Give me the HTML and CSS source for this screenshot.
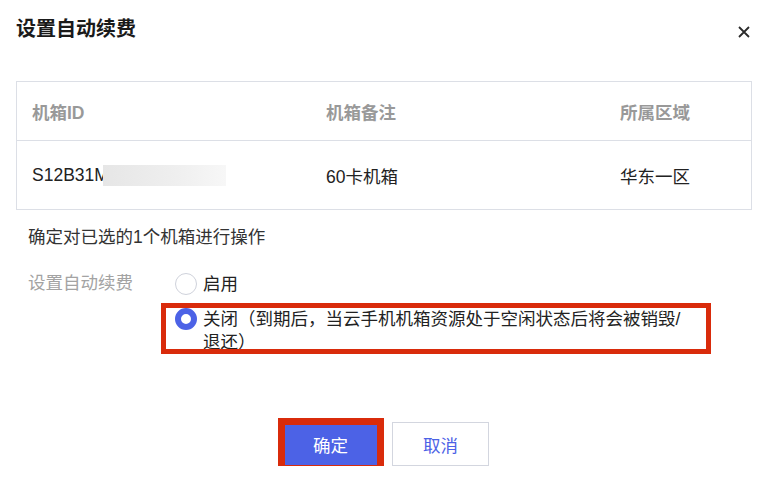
FILE: index.html
```html
<!DOCTYPE html>
<html lang="zh-CN">
  <head>
    <meta charset="UTF-8" />
    <meta name="viewport" content="width=device-width, initial-scale=1.0" />
    <title>设置自动续费</title>
    <link rel="stylesheet" href="styles.css">
  </head>

  <body>
    <div class="dialog">
      <!-- Header -->
      <div class="dialog-header">
        <h2 class="dialog-title">设置自动续费</h2>
        <button class="close-btn" aria-label="关闭">
          <svg width="12" height="12" viewBox="0 0 12 12">
            <path d="M1 1 L11 11 M11 1 L1 11" stroke="#2b2b2b" stroke-width="1.8" fill="none" />
          </svg>
        </button>
      </div>

      <!-- Selected boxes -->
      <div class="box-table">
        <div class="box-row box-head">
          <div class="box-cell">机箱ID</div>
          <div class="box-cell">机箱备注</div>
          <div class="box-cell">所属区域</div>
        </div>
        <div class="box-row">
          <div class="box-cell">S12B31M<span class="masked"></span></div>
          <div class="box-cell">60卡机箱</div>
          <div class="box-cell">华东一区</div>
        </div>
      </div>

      <p class="tip">确定对已选的1个机箱进行操作</p>

      <!-- Renew form -->
      <div class="form-item">
        <div class="form-label">设置自动续费</div>
        <div class="radio-group">
          <label class="radio">
            <span class="radio-dot"></span>
            <span class="radio-text">启用</span>
          </label>
          <label class="radio checked">
            <span class="radio-dot"></span>
            <span class="radio-text">关闭（到期后，当云手机机箱资源处于空闲状态后将会被销毁/退还）</span>
            <span class="mark mark-option"></span>
          </label>
        </div>
      </div>

      <!-- Footer -->
      <div class="dialog-footer">
        <button class="btn btn-primary">确定<span class="mark mark-btn"></span></button>
        <button class="btn">取消</button>
      </div>
    </div>
  </body>
</html>
```

FILE: styles.css
```css
/* General Styles */

body {
  font-family: "Liberation Sans", "Noto Sans CJK SC", sans-serif;
  margin: 0;
  padding: 0;
  background-color: white;
  color: #222;
}

.dialog {
  padding: 0 10px 0 16px;
}
/* Header */

.dialog-header {
  display: flex;
  justify-content: space-between;
  align-items: flex-start;
  padding-top: 15px;
}

.dialog-title {
  margin: 0;
  font-size: 20px;
  line-height: 28px;
  font-weight: bold;
  color: #1a1a1a;
}

.close-btn {
  margin-top: 11px;
  margin-right: 2px;
  padding: 0;
  border: none;
  background: none;
  width: 12px;
  height: 12px;
  display: flex;
}
/* Table */

.box-table {
  margin-top: 38px;
  border: 1px solid #dcdfe6;
}

.box-row {
  display: grid;
  grid-template-columns: 294px 294px 1fr;
  height: 68px;
  font-size: 17.5px;
}

.box-head {
  height: 58px;
  border-bottom: 1px solid #dcdfe6;
  color: #999;
  font-weight: 600;
}

.box-cell {
  display: flex;
  align-items: center;
  padding-left: 15px;
}

.masked {
  display: inline-block;
  width: 123px;
  height: 21px;
  margin-left: -6px;
  background: linear-gradient(90deg, #e6e6e6, #efefef 60%, #f7f7f7);
}
/* Form */

.tip {
  margin: 15px 0 0 12px;
  font-size: 17.5px;
  line-height: 24px;
  color: #333;
}

.form-item {
  display: flex;
  margin: 24px 0 0 12px;
  font-size: 17.5px;
  line-height: 23px;
}

.form-label {
  width: 147px;
  color: #a3a3a3;
  margin-top: -1px;
}

.radio-group {
  display: flex;
  flex-direction: column;
  gap: 12px;
}

.radio {
  position: relative;
  display: flex;
  align-items: flex-start;
  gap: 6px;
  color: #222;
}

.radio-dot {
  flex: none;
  width: 22px;
  height: 22px;
  box-sizing: border-box;
  border: 1.5px solid #cfd2db;
  border-radius: 50%;
  background: white;
}

.radio-text {
  width: 490px;
}

.radio.checked .radio-dot {
  border: 6px solid #4c62e6;
}
/* Annotations */

.mark {
  position: absolute;
  box-sizing: border-box;
  border: 5px solid #d92b0b;
  pointer-events: none;
}

.mark-option {
  left: -14px;
  top: -5px;
  width: 550px;
  height: 51px;
}

.mark-btn {
  left: -5px;
  top: -5px;
  width: 106px;
  height: 54px;
  border-width: 7px;
}
/* Footer */

.dialog-footer {
  display: flex;
  justify-content: center;
  gap: 13px;
  margin-top: 68px;
  padding-left: 3px;
}

.btn {
  position: relative;
  width: 97px;
  height: 44px;
  font-family: "Liberation Sans", "Noto Sans CJK SC", sans-serif;
  font-size: 17.5px;
  color: #4c62e6;
  background: white;
  border: 1.5px solid #d3d6df;
  cursor: pointer;
}

.btn-primary {
  color: white;
  background-color: #4c62e6;
  border-color: #4c62e6;
}
```
